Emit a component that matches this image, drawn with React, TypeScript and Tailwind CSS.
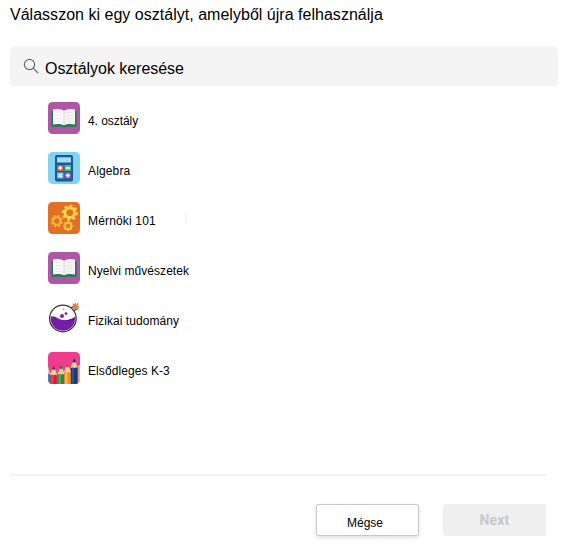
import React from 'react';

function BookIcon() {
  return (
    <svg viewBox="0 0 32 32" className="w-8 h-8">
      <rect width="32" height="32" rx="4.5" fill="#af57a5" />
      <path d="M3.5 9h25v15.7H18.2q-2.2 1.3-4.4 0H3.5z" fill="#198052" />
      <path d="M5 7.5q7-1.6 11 1.2v14.5q-4.5-2.2-11-.7z" fill="#fff" />
      <path d="M27 7.5q-7-1.6-11 1.2v14.5q4.5-2.2 11-.7z" fill="#f7f6f5" />
      <path d="M16 8.7v14.5" stroke="#d5d1cf" strokeWidth="1" />
      <path
        d="M7 10.5q3.5-.8 7 .6M7 13.5q3.5-.8 7 .6M7 16.5q3.5-.8 7 .6M7 19.5q3.5-.8 7 .6M18 11.1q3.5-1.4 7-.6M18 14.1q3.5-1.4 7-.6M18 17.1q3.5-1.4 7-.6M18 20.1q3.5-1.4 7-.6"
        fill="none"
        stroke="#e4e0de"
        strokeWidth=".8"
      />
    </svg>
  );
}

function CalculatorIcon() {
  return (
    <svg viewBox="0 0 32 32" className="w-8 h-8">
      <rect width="32" height="32" rx="4.5" fill="#84d2f1" />
      <rect x="7" y="3" width="18" height="26.5" rx="1.8" fill="#145b9c" />
      <rect x="9" y="5.3" width="14" height="5.2" fill="#a5dcf7" />
      <rect x="9" y="13" width="6.5" height="6" fill="#e4573b" />
      <rect x="16.5" y="13" width="6.5" height="6" fill="#58b783" />
      <rect x="9" y="20.5" width="6.5" height="6" fill="#71b9ee" />
      <rect x="16.5" y="20.5" width="6.5" height="6" fill="#8c61a9" />
      <path
        d="M10.3 16h4M12.3 14v4M17.8 16h4M10.8 22l3 3M13.8 22l-3 3M17.8 23.5h4M19.8 21.5v4"
        stroke="#fff"
        strokeWidth="1.5"
      />
    </svg>
  );
}

interface GearProps {
  x: number;
  y: number;
  scale: number;
  color: string;
  turn?: number;
}

function Gear({ x, y, scale, color, turn = 0 }: GearProps) {
  return (
    <g transform={`translate(${x} ${y}) rotate(${turn}) scale(${scale})`}>
      <circle r="4.9" fill="none" stroke={color} strokeWidth="2.9" />
      {[0, 45, 90, 135, 180, 225, 270, 315].map((angle) => (
        <rect key={angle} x="-1.5" y="-8.2" width="3" height="3" rx=".4" fill={color} transform={`rotate(${angle})`} />
      ))}
    </g>
  );
}

function GearsIcon() {
  return (
    <svg viewBox="0 0 32 32" className="w-8 h-8">
      <rect width="32" height="32" rx="4.5" fill="#e36f27" />
      <Gear x={21.8} y={10.7} scale={0.98} color="#fbd44b" turn={10} />
      <Gear x={8.8} y={19} scale={0.76} color="#f6b43b" turn={20} />
      <Gear x={20.2} y={23.9} scale={0.63} color="#fbc64d" />
    </svg>
  );
}

function FlaskIcon() {
  return (
    <svg viewBox="0 0 32 32" className="w-8 h-8">
      <clipPath id="flask">
        <circle cx="14.9" cy="16.5" r="12.2" />
      </clipPath>
      <path d="M22.5 7l3.5-3.5 2.8 2.8-3.5 3.5" fill="#fff" stroke="#343037" strokeWidth="1.2" />
      <circle cx="14.9" cy="16.5" r="13.3" fill="#fff" stroke="#38353b" strokeWidth="1.3" />
      <g clipPath="url(#flask)">
        <path d="M2 14.8q3.500-1.500 7.500 1.200 8 5 19-1.500V32H2z" fill="#751ca9" />
        <path d="M13 18.100q7 1.400 15-3.600v2.800q-7.500 3-15 .8z" fill="#5c168b" />
      </g>
      <circle cx="14" cy="14.1" r="2" fill="#7924ad" />
      <circle cx="18" cy="11.6" r="1.4" fill="#7924ad" />
      <circle cx="15.5" cy="7.2" r=".8" fill="#ae72cc" />
      <path d="M27.2 1l.6 2 2.2-1-.9 2.2L31 5l-2 .7.3 2.2-2-1.3-1.8 1 .3-2.2-1.9-.8 2.2-.7-.4-1.9 1.5.6z" fill="#dc804e" stroke="#dc804e" strokeWidth=".8" />
      <path d="M24.5 1.7l1 1M30 1.2l-.5.8M29.5 7.5l1 .5" stroke="#574249" strokeWidth=".8" />
    </svg>
  );
}

const pencils = [
  { x: 2.3, y: 13.5, color: '#d91f36', shade: '#f04850', tip: '#701529' },
  { x: 9.8, y: 12.8, color: '#298b42', shade: '#62ae47', tip: '#285b39' },
  { x: 16.2, y: 11, color: '#f28f20', shade: '#ffc044', tip: '#9f4d24' },
  { x: 22.9, y: 6.2, color: '#123e7d', shade: '#275a9b', tip: '#0a224e' },
];

function PencilsIcon() {
  return (
    <svg viewBox="0 0 32 32" className="w-8 h-8 rounded-[4.5px]">
      <rect width="32" height="32" fill="#ed3e8d" />
      <path d="M0 15l2.8 6v11H0z" fill="#2788bb" />
      <path d="M0 14l2.5 8H0z" fill="#eac397" />
      {pencils.map((p) => (
        <g key={p.x} transform={`translate(${p.x} ${p.y})`}>
          <path d="M0 9L3.3 0l3.3 9V32H0z" fill={p.color} />
          <path d="M0 9.8V8.5L3.3 0l3.3 8.5v1.3q-1.650-1-3.300 0-1.650-1-3.300 0z" fill="#f1ca9e" />
          <path d="M1.7 4L3.3 0l1.6 4z" fill={p.tip} />
          <path d="M1 9.7h2v20H1z" fill={p.shade} />
        </g>
      ))}
      <path d="M30.3 13h1.7v19h-1.7z" fill="#f3b56d" />
    </svg>
  );
}

const classes = [
  { name: '4. osztály', icon: <BookIcon />, spacing: 'tracking-[-0.05px]' },
  { name: 'Algebra', icon: <CalculatorIcon />, spacing: 'tracking-[0.15px]' },
  { name: 'Mérnöki 101', icon: <GearsIcon />, spacing: 'tracking-[0.16px]' },
  { name: 'Nyelvi művészetek', icon: <BookIcon />, spacing: 'tracking-[0.06px]' },
  { name: 'Fizikai tudomány', icon: <FlaskIcon />, spacing: 'tracking-[0.06px]' },
  { name: 'Elsődleges K-3', icon: <PencilsIcon />, spacing: 'tracking-[0.08px]' },
];

export default function App() {
  return (
    <main className="w-[565px] h-[545px] bg-white text-black font-['Liberation_Sans',sans-serif] flex flex-col pl-[10px] pt-[4px] overflow-hidden">
      <h1 className="text-base leading-[22px] tracking-[0.02px] whitespace-nowrap">Válasszon ki egy osztályt, amelyből újra felhasználja</h1>

      {/* SEARCH */}
      <div className="mt-5 w-[548px] h-10 shrink-0 rounded-[4px] bg-[#f4f4f4] flex items-center pl-[13px]">
        <svg viewBox="0 0 16 16" className="w-4 h-4 mr-[6px]" fill="none" stroke="#666" strokeWidth="1.1">
          <circle cx="6.5" cy="6.5" r="5.1" />
          <path d="M10.2 10.2L15 15" />
        </svg>
        <span className="text-base leading-5 pt-[5px] tracking-[-0.04px]">Osztályok keresése</span>
      </div>

      {/* CLASS LIST */}
      <ul className="mt-4 pl-[38px] flex flex-col gap-[18px]">
        {classes.map((item) => (
          <li key={item.name} className="h-8 flex gap-2">
            {item.icon}
            <span className={`pt-[10px] text-[12px] leading-[18px] whitespace-nowrap ${item.spacing}`}>{item.name}</span>
            {item.name === 'Mérnöki 101' && <span className="ml-[21px] mt-[11px] w-px h-[10px] bg-[#eee]" />}
          </li>
        ))}
      </ul>

      {/* FOOTER */}
      <footer className="mt-[90px] w-[536px] border-t-2 border-[#f2f2f2] pt-7 flex justify-end gap-6">
        <button className="w-[103px] h-8 rounded-[2px] border border-[#c8c8c8] bg-white pt-[5px] pr-[5px] text-[12px] leading-4 shadow-[0_2px_4px_rgba(0,0,0,0.12)]">
          Mégse
        </button>
        <button disabled className="w-[103px] h-8 rounded-[2px] bg-[#efefef] text-[#c8c8c8] font-['Roboto',sans-serif] text-sm font-bold tracking-[0.2px]">
          Next
        </button>
      </footer>
    </main>
  );
}
